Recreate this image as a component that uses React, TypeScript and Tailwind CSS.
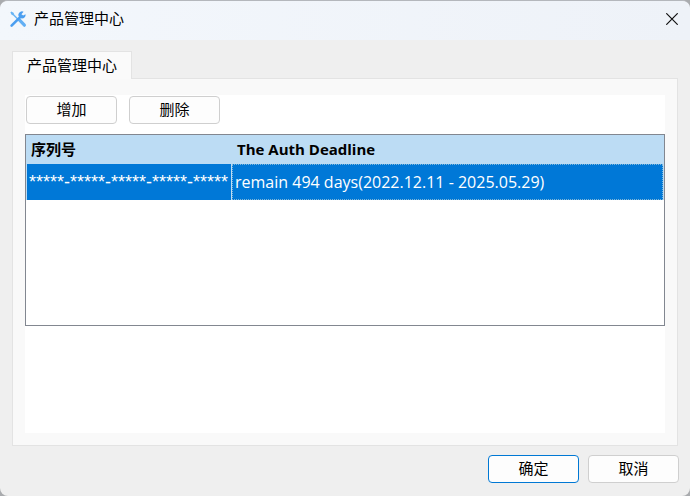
import React from "react";

function ToolsIcon() {
  return (
    <svg viewBox="0 0 18 18" className="size-[18px] shrink-0" fill="none" aria-hidden="true">
      <path d="M2.2 1.6 L4.6 2.7 L5.2 4.4 L9.2 8.4 L8.2 9.4 L4.2 5.4 L2.6 4.8 L1.4 2.4 Z" fill="#68b4f4" />
      <path d="M10.6 10.2 L15.4 15.2" stroke="#62aff4" strokeWidth="3.2" strokeLinecap="round" />
      <path d="M2.6 15.6 L11.4 6.8" stroke="#4b9ef0" strokeWidth="2.6" strokeLinecap="round" />
      <path d="M14.6 1.7 A3.6 3.6 0 1 0 16.5 4.2 L14.2 5.6 L12.4 4.3 Z" fill="#4b9ef0" />
    </svg>
  );
}

const buttonBase =
  "flex h-7 w-[91px] items-center justify-center rounded-[4px] border bg-[#fdfdfd] pb-0.5 text-[15px] leading-5 text-black";

export default function App() {
  return (
    <div className="min-h-screen bg-[#a9abae] font-['Open_Sans','Noto_Sans_CJK_SC',sans-serif] text-black">
      <div className="flex min-h-screen flex-col overflow-hidden rounded-lg border-t border-[#b4b7bc] bg-[#efefef]">
        <header className="flex h-[39px] items-center justify-between bg-linear-to-r from-[#f3f7fc] to-[#eef2f8] pr-3 pb-1 pl-[9px]">
          <div className="flex items-center gap-[7px]">
            <ToolsIcon />
            <h1 className="pb-0.5 text-[15px] leading-5">产品管理中心</h1>
          </div>
          <button type="button" aria-label="关闭" className="flex size-3 items-center justify-center">
            <svg viewBox="0 0 12 12" className="size-3" stroke="#111" strokeWidth="1.2" aria-hidden="true">
              <path d="M0.3 0.3 L11.7 11.7 M11.7 0.3 L0.3 11.7" />
            </svg>
          </button>
        </header>

        <main className="flex flex-1 flex-col px-3 pt-[11px] pb-[13px]">
          <div role="tablist" className="flex">
            <button
              type="button"
              role="tab"
              aria-selected="true"
              className="z-10 -mb-px h-7 w-[120px] border border-b-0 border-[#e3e3e3] bg-[#fafafa] pb-0.5 text-[15px] leading-5"
            >
              产品管理中心
            </button>
          </div>
          <section role="tabpanel" className="flex flex-1 flex-col border border-[#e3e3e3] bg-[#f9f9f9] px-3 pt-4 pb-3">
            <div className="flex flex-1 flex-col bg-white">
              <div className="flex gap-3 pt-px pb-2.5 pl-px">
                <button type="button" className={`${buttonBase} border-[#cfcfcf]`}>增加</button>
                <button type="button" className={`${buttonBase} border-[#cfcfcf]`}>删除</button>
              </div>
              <div className="h-48 border border-[#828790]">
                <table className="w-full border-separate border-spacing-0 text-left text-[15px] leading-5">
                  <thead>
                    <tr className="h-[29px] bg-[#bcdcf4]">
                      <th className="w-[206px] p-0 pb-0.5 pl-[5px] font-bold">序列号</th>
                      <th className="p-0 pb-0.5 pl-[5px] font-bold">The Auth Deadline</th>
                    </tr>
                  </thead>
                  <tbody>
                    <tr className="bg-[#bcdcf4] text-white">
                      <td className="p-0 px-px">
                        <div className="flex h-9 items-center bg-[#0078d7] pl-0.5 font-['Liberation_Sans',sans-serif] text-lg whitespace-nowrap">
                          *****-*****-*****-*****-*****
                        </div>
                      </td>
                      <td className="p-0 pr-px">
                        <div className="flex h-9 items-center border border-dotted border-[#7fb6d8] bg-[#0078d7] pl-0.5 text-base">
                          remain 494 days(2022.12.11 - 2025.05.29)
                        </div>
                      </td>
                    </tr>
                  </tbody>
                </table>
              </div>
            </div>
          </section>
          <div className="-mr-px flex justify-end gap-[9px] pt-[9px]">
            <button type="button" className={`${buttonBase} border-[#0078d4]`}>确定</button>
            <button type="button" className={`${buttonBase} border-[#cfcfcf]`}>取消</button>
          </div>
        </main>
      </div>
    </div>
  );
}
